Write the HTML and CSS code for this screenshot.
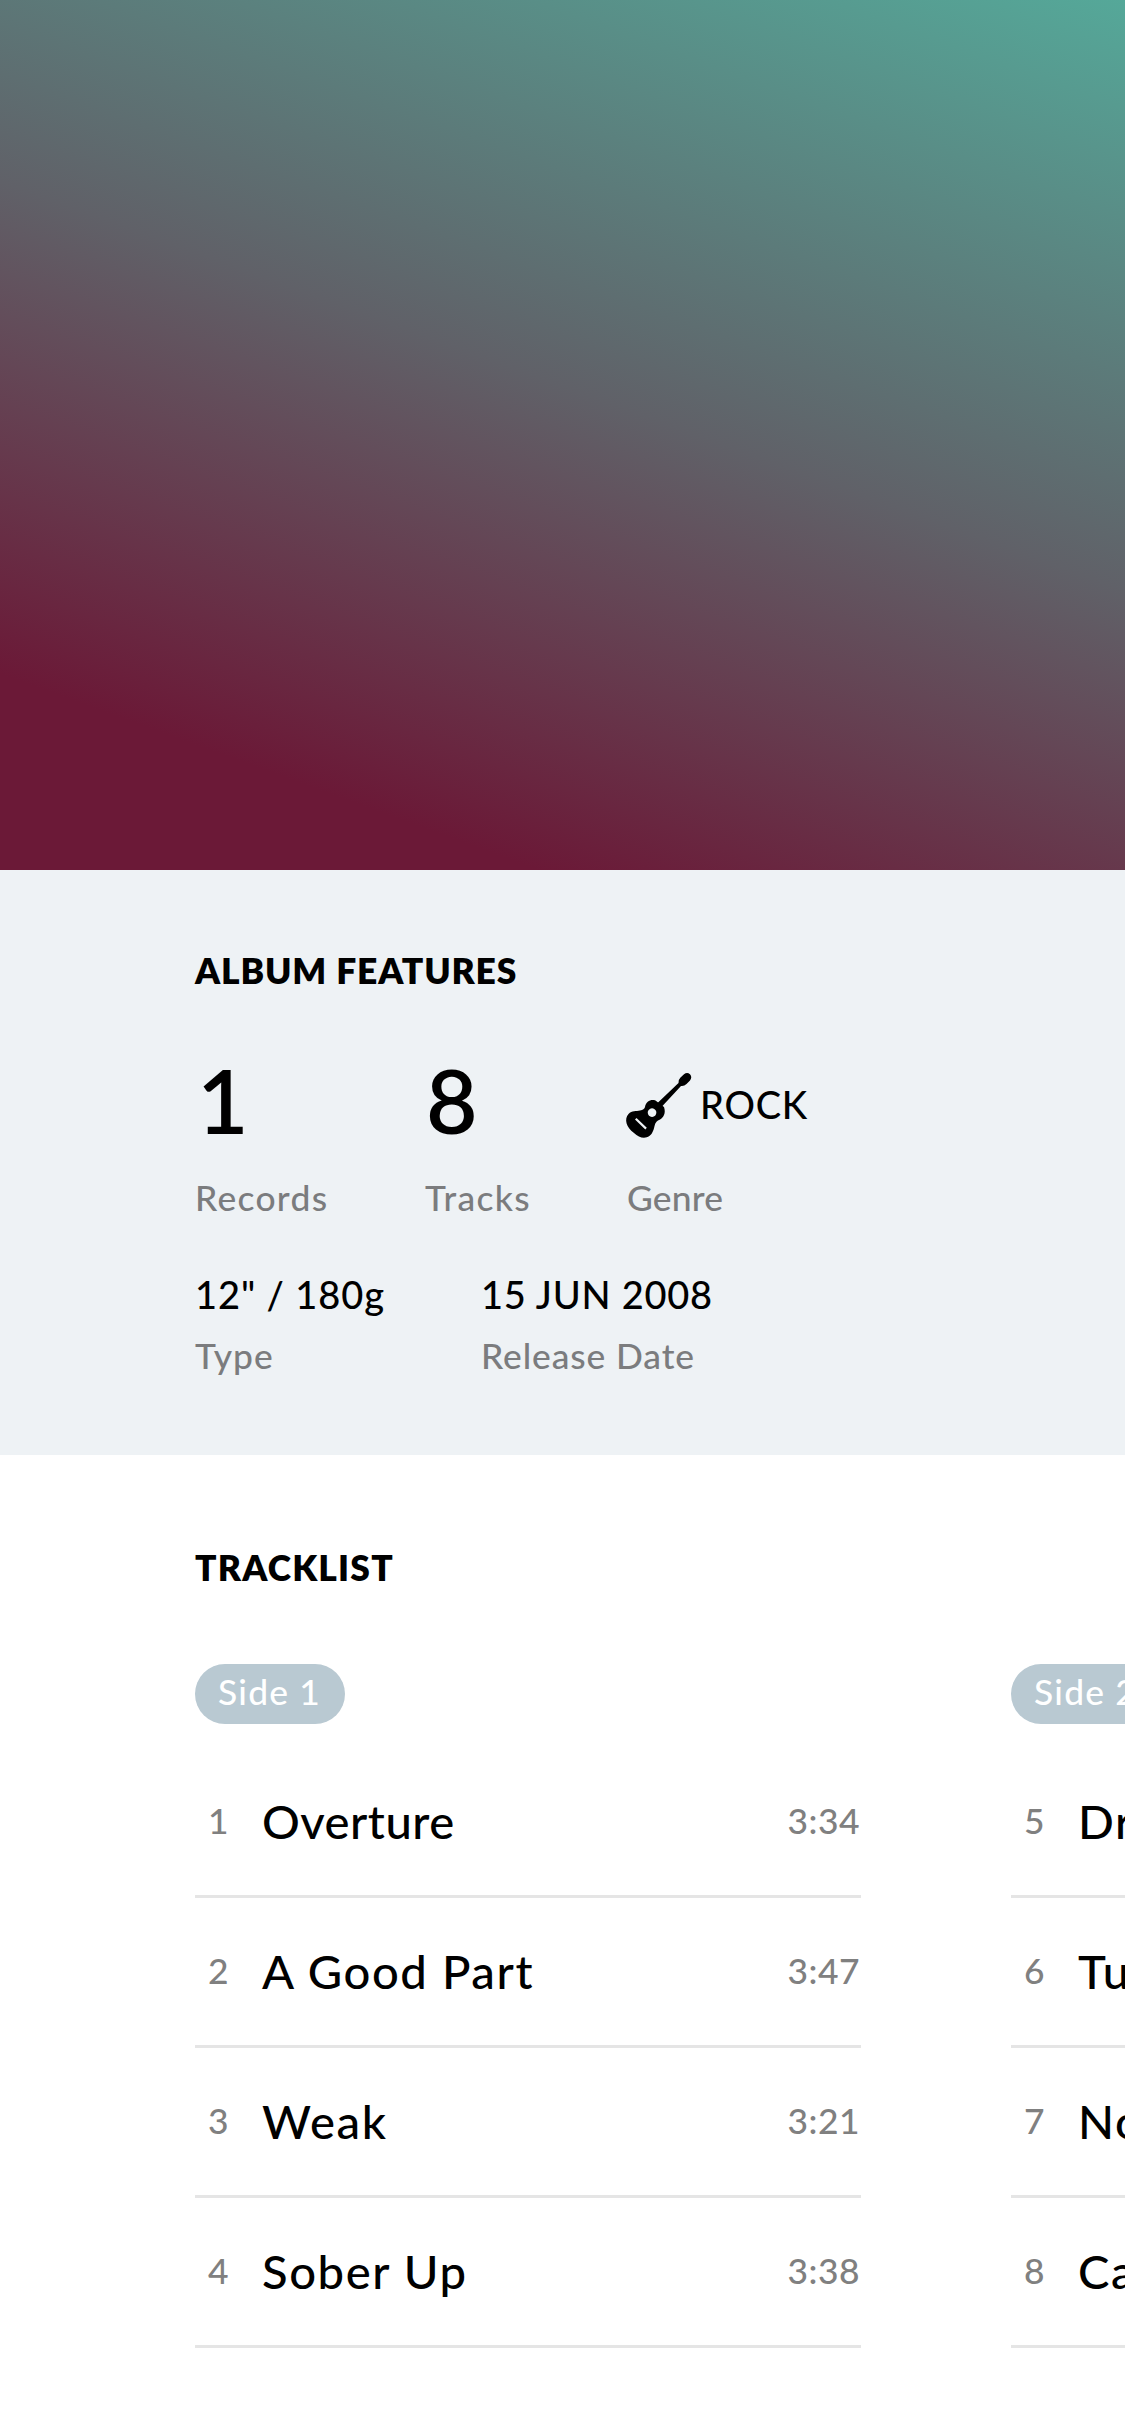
FILE: index.html
```html
<!DOCTYPE html>
<html lang="en">
<head>
<meta charset="utf-8">
<title>Album</title>
<link rel="stylesheet" href="styles.css">
</head>
<body>
<header class="hero"></header>
<section class="features">
  <h2 class="heading">ALBUM FEATURES</h2>
  <div class="row">
    <div class="item records"><div class="big">1</div><div class="label wide">Records</div></div>
    <div class="item tracks"><div class="big eight">8</div><div class="label wide">Tracks</div></div>
    <div class="item"><div class="genre">
      <svg class="guitar" viewBox="0 0 66 66">
        <path d="M31 30.500L52.500 10Q52 7 54.500 4.500L58 1.300Q61-1 64 1.200Q66.500 4 64 7.500L60.500 11Q58 13.500 55 13L35.500 34Z"/>
        <path fill-rule="evenodd" d="M19 34C20 28 25 26 29.500 27.500L38 34C40 40 38 45 32 47.500C28 50 29 54 27 58C24 66 15 67 8 60C0 54-2 46 2.500 41C6 37 10 38.500 14 37.500C17 37 18.500 36 19 34ZM26 35.300a4.300 4.300 0 1 0 .1 0ZM10.500 45.100L20.800 54.800L19.300 56.400L9 46.600Z"/>
      </svg><span class="value rock">ROCK</span></div><div class="label genre-label">Genre</div></div>
  </div>
  <div class="row second">
    <div class="item type"><div class="value">12" / 180g</div><div class="label">Type</div></div>
    <div class="item"><div class="value date">15 JUN 2008</div><div class="label">Release Date</div></div>
  </div>
</section>
<section class="tracklist">
  <h2 class="heading tl">TRACKLIST</h2>
  <div class="sides">
    <div class="side">
      <span class="pill">Side 1</span>
      <ol class="list">
        <li class="track"><span class="num">1</span><span class="name overture">Overture</span><span class="time">3:34</span></li>
        <li class="track"><span class="num">2</span><span class="name">A Good Part</span><span class="time">3:47</span></li>
        <li class="track"><span class="num">3</span><span class="name">Weak</span><span class="time">3:21</span></li>
        <li class="track"><span class="num">4</span><span class="name">Sober Up</span><span class="time">3:38</span></li>
      </ol>
    </div>
    <div class="side">
      <span class="pill">Side 2</span>
      <ol class="list">
        <li class="track"><span class="num">5</span><span class="name">Drama</span></li>
        <li class="track"><span class="num">6</span><span class="name">Turning Out</span></li>
        <li class="track"><span class="num">7</span><span class="name">No Grass Today</span></li>
        <li class="track"><span class="num">8</span><span class="name">Call My Dad</span></li>
      </ol>
    </div>
  </div>
</section>
</body>
</html>
```
FILE: styles.css
```css
* { box-sizing: border-box; }
html, body { margin: 0; height: 2436px; overflow: hidden; }
body { background: #fff; color: #000; font-family: Lato, "Open Sans", sans-serif; width: 1125px; }

.hero { height: 870px; background: linear-gradient(200deg, #55a899 0, #606168 555px, #6b1937 1018px); }

.heading { margin: 0; font-size: 35.4px; line-height: 52px; font-weight: 800; letter-spacing: .85px; }
.tl { letter-spacing: 1.2px; }

.features { height: 585px; padding: 75px 0 0 195px; background: #eef2f5; }
.row { display: flex; margin-top: 48px; }
.second { margin-top: 45px; }
.records { width: 230px; }
.tracks { width: 202px; }
.type { width: 286px; }
.big { height: 110px; line-height: 110px; font-size: 89px; font-weight: 600; padding-left: 2px; margin-bottom: 17px; }
.eight { padding-left: 1px; }
.label { font-size: 35.4px; line-height: 52px; color: #7b7c7e; font-weight: 500; letter-spacing: .9px; }
.wide { letter-spacing: 1.3px; }
.genre-label { letter-spacing: .2px; }
.value { font-size: 38px; line-height: 50px; font-weight: 500; letter-spacing: .9px; margin-bottom: 11px; white-space: nowrap; }
.date, .rock { letter-spacing: .75px; }
.rock { margin: 0; }
.genre { display: flex; align-items: center; height: 110px; padding-top: 7px; margin-bottom: 17px; }
.guitar { width: 66px; height: 66px; margin: 4px 8px 0 -1px; overflow: visible; }

.tracklist { padding: 87px 0 0 195px; }
.sides { display: flex; gap: 150px; margin-top: 70px; }
.side { flex: 0 0 666px; }
.pill { display: block; width: 150px; height: 60px; padding-left: 23px; border-radius: 30px; background: #b9c9d2; color: #fff; font-size: 35.4px; line-height: 56px; letter-spacing: 1.2px; font-weight: 500; }
.list { list-style: none; margin: 24px 0 0; padding: 0; }
.track { display: flex; align-items: center; height: 150px; padding: 0 0 1px 13px; border-bottom: 3px solid #e5e5e5; }
.num, .time { font-size: 35.4px; line-height: 50px; font-weight: 500; color: #808080; }
.num { width: 54px; }
.name { flex: 1; font-size: 47.2px; line-height: 60px; font-weight: 500; letter-spacing: 1.6px; white-space: nowrap; }
.overture { letter-spacing: .5px; }
.time { letter-spacing: .5px; padding-right: 1px; }
```
